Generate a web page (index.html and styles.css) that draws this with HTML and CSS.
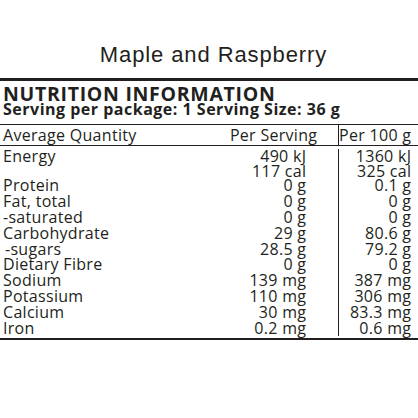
FILE: index.html
```html
<!DOCTYPE html>
<html>
<head>
<meta charset="utf-8">
<link rel="stylesheet" href="styles.css">
</head>
<body>
<h1 class="title">Maple and Raspberry</h1>
<section class="panel">
  <div class="head">
    <div class="head-title">NUTRITION INFORMATION</div>
    <div class="head-sub">Serving per package: 1 Serving Size: 36 g</div>
  </div>
  <div class="grid colhead">
    <div class="c-label">Average Quantity</div>
    <div class="c-serv hdr">Per Serving</div>
    <div class="c-100">Per 100 g</div>
  </div>
  <div class="grid body">
    <div class="c-label">Energy</div><div class="c-serv">490 kJ</div><div class="c-100">1360 kJ</div>
    <div class="c-label"></div><div class="c-serv">117 cal</div><div class="c-100">325 cal</div>
    <div class="c-label">Protein</div><div class="c-serv">0 g</div><div class="c-100">0.1 g</div>
    <div class="c-label">Fat, total</div><div class="c-serv">0 g</div><div class="c-100">0 g</div>
    <div class="c-label">-saturated</div><div class="c-serv">0 g</div><div class="c-100">0 g</div>
    <div class="c-label">Carbohydrate</div><div class="c-serv">29 g</div><div class="c-100">80.6 g</div>
    <div class="c-label sub">-sugars</div><div class="c-serv">28.5 g</div><div class="c-100">79.2 g</div>
    <div class="c-label">Dietary Fibre</div><div class="c-serv">0 g</div><div class="c-100">0 g</div>
    <div class="c-label">Sodium</div><div class="c-serv">139 mg</div><div class="c-100">387 mg</div>
    <div class="c-label">Potassium</div><div class="c-serv">110 mg</div><div class="c-100">306 mg</div>
    <div class="c-label">Calcium</div><div class="c-serv">30 mg</div><div class="c-100">83.3 mg</div>
    <div class="c-label">Iron</div><div class="c-serv">0.2 mg</div><div class="c-100">0.6 mg</div>
  </div>
</section>
</body>
</html>
```
FILE: styles.css
```css
html, body {
  margin: 0;
  padding: 0;
  background: #fff;
}
body {
  width: 418px;
  height: 418px;
  overflow: hidden;
  color: #231f20;
  font-family: "Open Sans", "DejaVu Sans", sans-serif;
}
.title {
  margin: 0;
  padding: 42px 0 10px 9px;
  line-height: 26px;
  text-align: center;
  font-family: "Liberation Sans", Arial, sans-serif;
  font-weight: normal;
  font-size: 22px;
  letter-spacing: 0.9px;
  color: #231f20;
}
.panel {
  border-top: 3px solid #231f20;
  border-bottom: 2px solid #231f20;
}
.head {
  padding: 4.5px 0 7.5px 3px;
}
.head-title {
  font-weight: 700;
  font-size: 19.5px;
  line-height: 16px;
  letter-spacing: 0.7px;
  white-space: nowrap;
}
.head-sub {
  font-weight: 700;
  font-size: 16px;
  line-height: 15px;
  letter-spacing: 0.5px;
  white-space: nowrap;
}
.grid {
  display: grid;
  grid-template-columns: 225px 113px 80px;
  font-size: 16px;
  letter-spacing: 0.3px;
}
.colhead {
  border-top: 1px solid #231f20;
  border-bottom: 1px solid #231f20;
  grid-template-rows: 20px;
  line-height: 20px;
}
.body {
  padding: 3px 0 2px;
  grid-template-rows: 15.6px 13.4px repeat(10, 15.8px);
  line-height: 15px;
}
.c-label {
  padding-left: 3px;
  white-space: nowrap;
  display: flex;
  align-items: center;
}
.c-label.sub {
  padding-left: 5px;
}
.c-serv {
  text-align: right;
  padding-right: 31.7px;
  white-space: nowrap;
  display: flex;
  align-items: center;
  justify-content: flex-end;
}
.c-serv.hdr {
  padding-right: 20.7px;
}
.c-100 {
  border-left: 1px solid #231f20;
  padding-right: 6.7px;
  white-space: nowrap;
  display: flex;
  align-items: center;
  justify-content: flex-end;
}
```
